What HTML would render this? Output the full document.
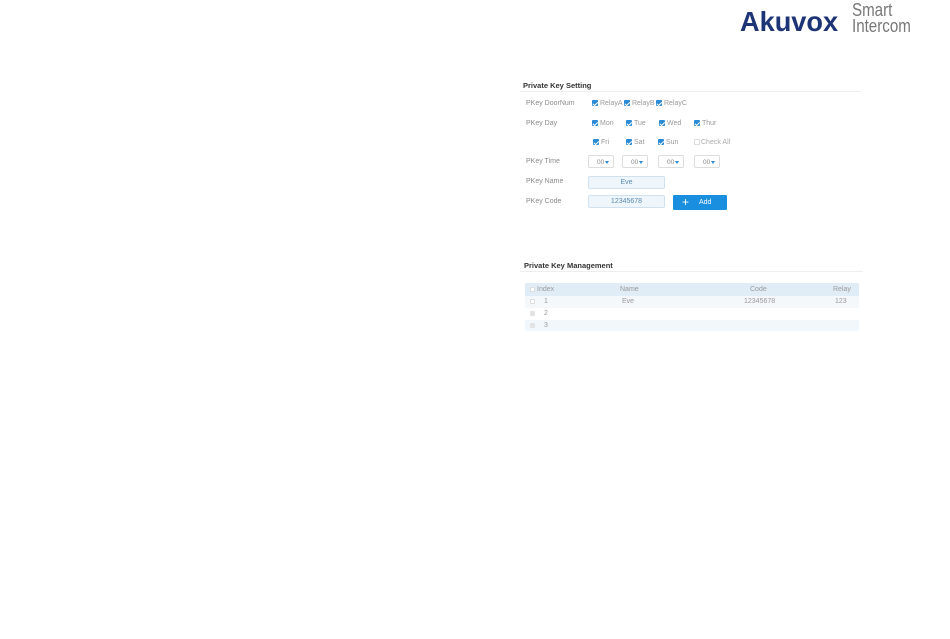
<!DOCTYPE html>
<html><head><meta charset="utf-8"><style>
body{margin:0;width:950px;height:639px;background:#fff;position:relative;font-family:"Liberation Sans",sans-serif;overflow:hidden}
.a{position:absolute;white-space:nowrap}
.t{font-size:7.5px;font-weight:bold;color:#333}
.l{font-size:7px;color:#8a8a8a}
.cb{position:absolute;width:6px;height:6px;background:#2a8ad6;border-radius:1px}
.cb:after{content:"";position:absolute;left:1.5px;top:0.5px;width:2px;height:3.5px;border:solid #fff;border-width:0 1px 1px 0;transform:rotate(45deg)}
.ce{position:absolute;width:6px;height:6px;border:1px solid #ddd;box-sizing:border-box;border-radius:1px;background:#fff}
.cg{position:absolute;width:6px;height:6px;background:#e3e3e3;border-radius:1px}
.ct{font-size:7px;color:#999}
.sel{position:absolute;width:26px;height:13px;border:1px solid #ddd;box-sizing:border-box;border-radius:2px;font-size:6.5px;color:#888}
.sel span{position:absolute;left:8px;top:2.5px}
.sel i{position:absolute;right:4px;top:4.5px;width:0;height:0;border-left:2.5px solid transparent;border-right:2.5px solid transparent;border-top:3px solid #2a8ad6}
.in{position:absolute;width:77px;height:13px;background:#eef6fc;border:1px solid #d0e2ef;box-sizing:border-box;border-radius:2px;font-size:7px;color:#5a8ab0;text-align:center;line-height:11px}
.td{font-size:7px;color:#999}
</style></head><body>
<div class="a" style="left:740px;top:6px;font-size:28px;font-weight:bold;color:#1d3577;transform:scaleX(0.97);transform-origin:left">Akuvox</div>
<div class="a" style="left:852px;top:2px;font-size:18px;color:#777;transform:scaleX(0.84);transform-origin:left;line-height:16px">Smart<br>Intercom</div>

<div class="a t" style="left:523px;top:81px">Private Key Setting</div>
<div class="a" style="left:520px;top:91px;width:341px;height:1px;background:#eee"></div>

<div class="a l" style="left:526px;top:100px">PKey DoorNum</div>
<div class="cb" style="left:592px;top:100px"></div><div class="a ct" style="left:600px;top:100px">RelayA</div>
<div class="cb" style="left:624px;top:100px"></div><div class="a ct" style="left:632px;top:100px">RelayB</div>
<div class="cb" style="left:656px;top:100px"></div><div class="a ct" style="left:664px;top:100px">RelayC</div>

<div class="a l" style="left:526px;top:120px">PKey Day</div>
<div class="cb" style="left:592px;top:120px"></div><div class="a ct" style="left:600px;top:120px">Mon</div>
<div class="cb" style="left:626px;top:120px"></div><div class="a ct" style="left:634px;top:120px">Tue</div>
<div class="cb" style="left:659px;top:120px"></div><div class="a ct" style="left:667px;top:120px">Wed</div>
<div class="cb" style="left:694px;top:120px"></div><div class="a ct" style="left:702px;top:120px">Thur</div>

<div class="cb" style="left:593px;top:139px"></div><div class="a ct" style="left:601px;top:139px">Fri</div>
<div class="cb" style="left:626px;top:139px"></div><div class="a ct" style="left:634px;top:139px">Sat</div>
<div class="cb" style="left:658px;top:139px"></div><div class="a ct" style="left:666px;top:139px">Sun</div>
<div class="ce" style="left:694px;top:139px"></div><div class="a ct" style="left:701px;top:139px;color:#aaa">Check All</div>

<div class="a l" style="left:526px;top:158px">PKey Time</div>
<div class="sel" style="left:588px;top:155px"><span>00</span><i></i></div>
<div class="sel" style="left:622px;top:155px"><span>00</span><i></i></div>
<div class="sel" style="left:658px;top:155px"><span>00</span><i></i></div>
<div class="sel" style="left:694px;top:155px"><span>00</span><i></i></div>

<div class="a l" style="left:526px;top:178px">PKey Name</div>
<div class="in" style="left:588px;top:176px">Eve</div>
<div class="a l" style="left:526px;top:198px">PKey Code</div>
<div class="in" style="left:588px;top:195px">12345678</div>
<div class="a" style="left:673px;top:195px;width:54px;height:15px;background:#1a8fe0;border-radius:1px;color:#fff;font-size:7px;line-height:15px"><span style="position:absolute;left:9px;top:0px;font-size:12px">+</span><span style="position:absolute;left:26px">Add</span></div>

<div class="a t" style="left:524px;top:261px">Private Key Management</div>
<div class="a" style="left:520px;top:271px;width:343px;height:1px;background:#eee"></div>

<div class="a" style="left:525px;top:283px;width:334px;height:13px;background:#e1edf6"></div>
<div class="a" style="left:525px;top:296px;width:334px;height:12px;background:#f4f8fb"></div>
<div class="a" style="left:525px;top:320px;width:334px;height:11px;background:#f2f7fb"></div>
<div class="ce" style="left:530px;top:287px;width:5px;height:5px"></div>
<div class="a td" style="left:537px;top:286px">Index</div>
<div class="a td" style="left:620px;top:286px">Name</div>
<div class="a td" style="left:750px;top:286px">Code</div>
<div class="a td" style="left:833px;top:286px">Relay</div>
<div class="ce" style="left:530px;top:299px;width:5px;height:5px"></div>
<div class="a td" style="left:544px;top:298px">1</div>
<div class="a td" style="left:622px;top:298px">Eve</div>
<div class="a td" style="left:744px;top:298px">12345678</div>
<div class="a td" style="left:835px;top:298px">123</div>
<div class="cg" style="left:530px;top:311px;width:5px;height:5px"></div>
<div class="a td" style="left:544px;top:310px">2</div>
<div class="cg" style="left:530px;top:323px;width:5px;height:5px"></div>
<div class="a td" style="left:544px;top:322px">3</div>
</body></html>
